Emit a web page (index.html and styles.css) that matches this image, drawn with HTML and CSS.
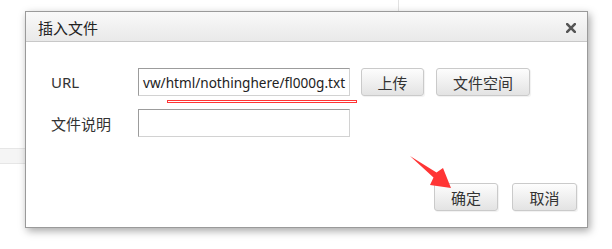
FILE: index.html
```html
<!DOCTYPE html>
<html lang="zh-CN">
<head>
<meta charset="utf-8">
<title>插入文件</title>
<link rel="stylesheet" href="styles.css">
</head>
<body>
<div class="page">
  <div class="bg-cols"><div class="bg-left"></div></div>
  <div class="bg-band"></div>
</div>

<div class="dialog">
  <div class="dlg-head">
    <span class="dlg-title">插入文件</span>
    <svg class="dlg-close" viewBox="0 0 10 10" width="10" height="10"><path d="M1.2 1.2 L8.8 8.8 M8.8 1.2 L1.2 8.8" stroke="#555" stroke-width="2.6" stroke-linecap="square"/></svg>
  </div>
  <div class="dlg-body">
    <div class="row">
      <span class="label">URL</span>
      <div class="field url"><span class="url-text">vw/html/nothinghere/fl000g.txt</span></div>
      <button class="btn btn-upload">上传</button>
      <button class="btn btn-space">文件空间</button>
    </div>
    <div class="row">
      <span class="label">文件说明</span>
      <div class="field"></div>
    </div>
  </div>
  <div class="dlg-foot">
    <button class="btn btn-ok">确定</button>
    <button class="btn btn-cancel">取消</button>
  </div>
</div>

<div class="mark-line"></div>
<svg class="mark-arrow" viewBox="405 150 50 42" width="50" height="42">
  <polygon points="410,156 436.5,172.5 443,168 451,188 430,185 433.5,177.5" fill="#ff3535"/>
</svg>
</body>
</html>
```

FILE: styles.css
```css
html, body {
  margin: 0;
  padding: 0;
}
body {
  width: 612px;
  height: 249px;
  overflow: hidden;
  position: relative;
  background: #fff;
  font-family: "Noto Sans", "Noto Sans CJK SC", sans-serif;
  color: #333;
}
.page {
  display: flex;
  flex-direction: column;
}
.bg-cols {
  height: 148px;
  display: flex;
}
.bg-left {
  width: 398px;
  border-right: 1px solid #e2e2e2;
}
.bg-band {
  width: 200px;
  height: 14px;
  background: #f5f5f5;
  border-top: 1px solid #e6e6e6;
  border-bottom: 1px solid #e6e6e6;
}

.dialog {
  position: absolute;
  left: 25px;
  top: 11px;
  width: 561px;
  height: 215px;
  border: 1px solid #9a9a9a;
  background: #fff;
  box-shadow: 2px 3px 8px rgba(0, 0, 0, 0.35);
  display: flex;
  flex-direction: column;
}
.dlg-head {
  height: 29px;
  border-bottom: 1px solid #c8c8c8;
  background: linear-gradient(#f9f9f9, #e9e9e9);
  display: flex;
  align-items: center;
  justify-content: space-between;
  padding: 0 11px 0 12px;
}
.dlg-title {
  font-family: "Noto Sans CJK SC", sans-serif;
  font-size: 15px;
  color: #222;
  line-height: 1;
  margin-top: 2px;
}
.dlg-close {
  display: block;
  margin-top: 3px;
}

.dlg-body {
  padding: 26px 0 0 25px;
  display: flex;
  flex-direction: column;
  gap: 13px;
}
.row {
  display: flex;
  align-items: center;
}
.label {
  width: 87px;
  font-family: "Noto Sans", "Noto Sans CJK SC", sans-serif;
  font-size: 15px;
  color: #333;
}
.field {
  width: 210px;
  height: 26px;
  border: 1px solid;
  border-color: #9c9c9c #d2d2d2 #d2d2d2 #9c9c9c;
  background: #fff;
  display: flex;
  align-items: center;
  overflow: hidden;
  white-space: nowrap;
}
.url {
  padding-left: 4px;
  width: 206px;
}
.url-text {
  font-family: "Noto Sans", sans-serif;
  font-size: 13.6px;
  color: #222;
}

.btn {
  font-family: "Noto Sans CJK SC", sans-serif;
  font-size: 15px;
  color: #333;
  height: 28px;
  border: 1px solid #cacaca;
  border-radius: 3px;
  background: linear-gradient(#fdfdfd, #e3e3e3);
  box-shadow: 1px 1px 1px rgba(0, 0, 0, 0.06);
  padding: 0;
  line-height: 1;
  display: flex;
  align-items: center;
  justify-content: center;
}
.btn-upload {
  width: 63px;
  margin-left: 11px;
}
.btn-space {
  width: 94px;
  margin-left: 12px;
}
.dlg-foot {
  margin-top: auto;
  display: flex;
  justify-content: flex-end;
  gap: 14px;
  padding: 0 10px 16px 0;
}
.btn-ok {
  width: 64px;
}
.btn-cancel {
  width: 65px;
}

.mark-line {
  position: absolute;
  left: 167px;
  top: 100px;
  width: 188px;
  height: 1px;
  border: 1px solid #ff3535;
  background: #fff;
}
.mark-arrow {
  position: absolute;
  left: 405px;
  top: 150px;
}
```
